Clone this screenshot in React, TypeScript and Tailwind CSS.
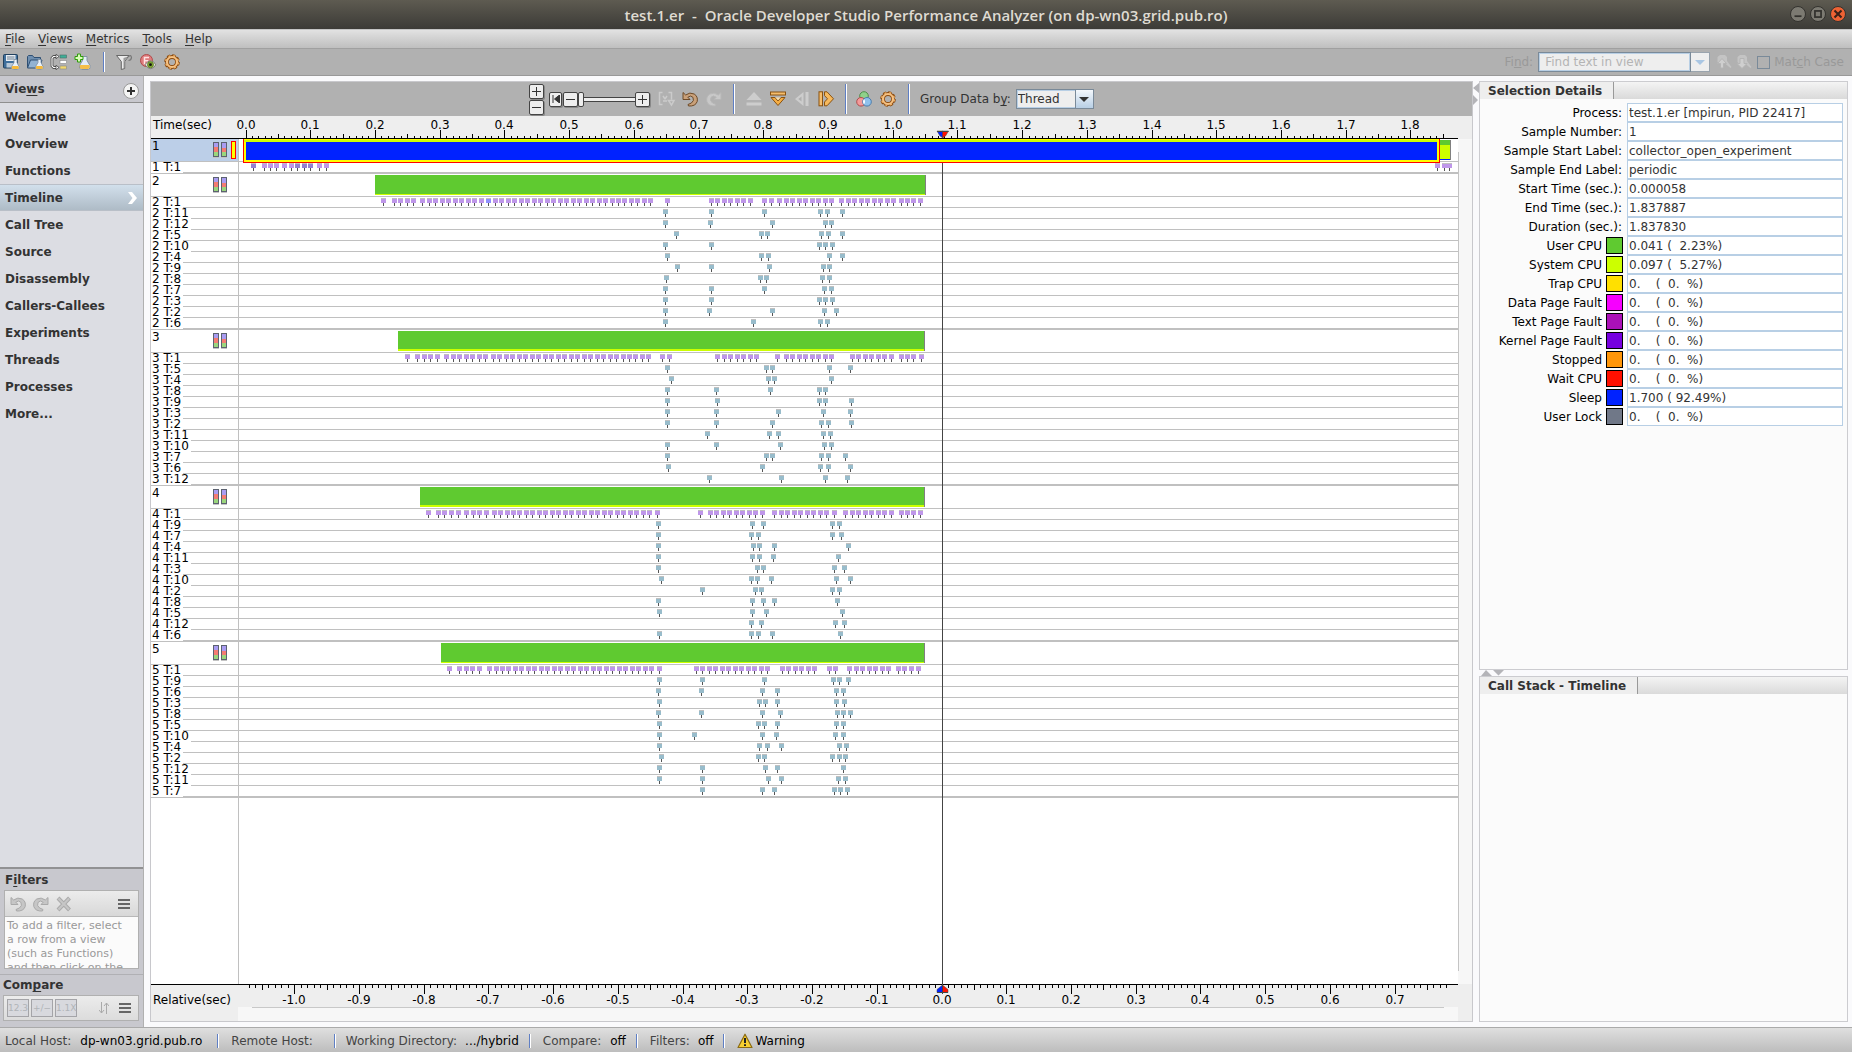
import React from "react";

/* ---------- timeline data ---------- */

// Horizontal positions are measured on the sheet that holds the row headers and the lanes.
const LANE_START = 239;
const ORIGIN = 246;
const STEP = 64.72;
const CURSOR = 942;

type Thread = { name: string; flags: number[]; call?: boolean };
type Group = {
  id: string;
  start: number;
  end: number;
  system: number;
  selected?: boolean;
  threads: Thread[];
};

const G1_MAIN = [253, 264, 270, 276, 284, 291, 297, 304, 310, 319, 326, 1437, 1444, 1449];
const G2_MAIN = [
  383, 394, 400, 407, 413, 422, 429, 435, 442, 448, 455, 461, 468, 474, 481, 488, 495, 501, 508, 514, 521, 527, 534,
  540, 547, 553, 560, 566, 573, 579, 586, 592, 599, 605, 612, 618, 624, 631, 637, 644, 650, 667, 711, 717, 724, 730,
  737, 743, 750, 764, 771, 779, 786, 792, 799, 805, 812, 818, 825, 831, 841, 848, 854, 861, 867, 874, 880, 887, 893,
  901, 907, 913, 920,
];
const G3_MAIN = [
  407, 417, 424, 430, 437, 446, 453, 459, 466, 472, 479, 485, 493, 499, 506, 512, 519, 525, 532, 538, 545, 551, 558,
  564, 571, 577, 584, 590, 597, 603, 610, 616, 623, 629, 635, 642, 648, 662, 669, 717, 724, 730, 737, 743, 750, 756,
  777, 786, 792, 799, 805, 812, 818, 825, 831, 852, 858, 865, 871, 878, 884, 891, 901, 907, 913, 921,
];
const G4_MAIN = [
  428, 438, 444, 451, 458, 466, 473, 479, 486, 494, 500, 507, 513, 519, 526, 532, 539, 545, 552, 558, 565, 571, 578,
  584, 591, 597, 604, 610, 617, 623, 630, 636, 643, 649, 657, 700, 710, 716, 723, 729, 736, 742, 749, 755, 762, 774,
  781, 787, 794, 800, 807, 813, 820, 826, 834, 845, 852, 858, 865, 871, 878, 884, 891, 901, 907, 913, 920,
];
const G5_MAIN = [
  449, 459, 466, 472, 479, 489, 496, 502, 508, 515, 521, 528, 534, 541, 547, 554, 560, 567, 573, 580, 586, 593, 599,
  606, 612, 619, 625, 632, 638, 645, 651, 659, 696, 702, 709, 715, 722, 728, 735, 741, 748, 754, 761, 767, 782, 788,
  795, 801, 808, 814, 829, 835, 849, 856, 862, 869, 875, 882, 888, 898, 904, 911, 918,
];

const GROUPS: Group[] = [
  {
    id: "1",
    start: 246,
    end: 1451,
    system: 0,
    selected: true,
    threads: [{ name: "1 T:1", call: true, flags: G1_MAIN }],
  },
  {
    id: "2",
    start: 375,
    end: 926,
    system: 1,
    threads: [
      { name: "2 T:1", call: true, flags: G2_MAIN },
      { name: "2 T:11", flags: [665, 711, 764, 820, 827, 842] },
      { name: "2 T:12", flags: [665, 710, 772, 825, 831] },
      { name: "2 T:5", flags: [676, 761, 767, 821, 828, 842] },
      { name: "2 T:10", flags: [665, 711, 819, 825, 832] },
      { name: "2 T:4", flags: [667, 761, 768, 829, 842] },
      { name: "2 T:9", flags: [677, 711, 769, 823, 829] },
      { name: "2 T:8", flags: [666, 760, 766, 822, 829] },
      { name: "2 T:7", flags: [665, 711, 764, 824, 831] },
      { name: "2 T:3", flags: [665, 711, 819, 825, 832] },
      { name: "2 T:2", flags: [665, 709, 772, 824, 836] },
      { name: "2 T:6", flags: [665, 753, 820, 827] },
    ],
  },
  {
    id: "3",
    start: 398,
    end: 925,
    system: 2,
    threads: [
      { name: "3 T:1", call: true, flags: G3_MAIN },
      { name: "3 T:5", flags: [667, 766, 772, 829, 850] },
      { name: "3 T:4", flags: [671, 768, 774, 831] },
      { name: "3 T:8", flags: [667, 716, 770, 819, 825] },
      { name: "3 T:9", flags: [667, 717, 819, 825, 851] },
      { name: "3 T:3", flags: [667, 716, 778, 823, 850] },
      { name: "3 T:2", flags: [667, 716, 772, 821, 828, 851] },
      { name: "3 T:11", flags: [707, 769, 778, 823, 830] },
      { name: "3 T:10", flags: [667, 716, 780, 824, 831] },
      { name: "3 T:7", flags: [667, 766, 772, 821, 828, 845] },
      { name: "3 T:6", flags: [668, 762, 820, 828, 850] },
      { name: "3 T:12", flags: [709, 781, 825, 847] },
    ],
  },
  {
    id: "4",
    start: 420,
    end: 925,
    system: 2,
    threads: [
      { name: "4 T:1", call: true, flags: G4_MAIN },
      { name: "4 T:9", flags: [658, 752, 763, 832, 839] },
      { name: "4 T:7", flags: [658, 751, 758, 832, 841] },
      { name: "4 T:4", flags: [658, 753, 759, 774, 848] },
      { name: "4 T:11", flags: [658, 752, 759, 773, 838] },
      { name: "4 T:3", flags: [658, 757, 763, 834, 844] },
      { name: "4 T:10", flags: [661, 751, 757, 771, 836, 850] },
      { name: "4 T:2", flags: [702, 755, 761, 832, 839] },
      { name: "4 T:8", flags: [658, 752, 763, 774, 837] },
      { name: "4 T:5", flags: [659, 752, 766, 842] },
      { name: "4 T:12", flags: [751, 761, 835, 844] },
      { name: "4 T:6", flags: [659, 751, 758, 772, 840] },
    ],
  },
  {
    id: "5",
    start: 441,
    end: 925,
    system: 1,
    threads: [
      { name: "5 T:1", call: true, flags: G5_MAIN },
      { name: "5 T:9", flags: [659, 702, 764, 833, 839, 848] },
      { name: "5 T:6", flags: [658, 701, 762, 777, 836, 843] },
      { name: "5 T:3", flags: [659, 759, 765, 777, 836, 844] },
      { name: "5 T:8", flags: [658, 701, 762, 780, 837, 843, 850] },
      { name: "5 T:5", flags: [659, 758, 764, 777, 836, 843] },
      { name: "5 T:10", flags: [659, 694, 762, 776, 835, 843] },
      { name: "5 T:4", flags: [659, 759, 767, 781, 839, 846] },
      { name: "5 T:2", flags: [661, 758, 764, 832, 839, 845] },
      { name: "5 T:12", flags: [659, 702, 765, 777, 843] },
      { name: "5 T:11", flags: [659, 702, 768, 781, 838, 845] },
      { name: "5 T:7", flags: [702, 762, 774, 834, 840, 847] },
    ],
  },
];

const DARK_FLAGS = [253, 297, 304, 310];

function flagColor(group: string, thread: Thread, x: number) {
  if (!thread.call) return "#98bccb";
  if (group === "1" && DARK_FLAGS.includes(x)) return "#9480d0";
  if (group === "2" && x === 488) return "#9090ff";
  return "#bf97ea";
}

/* ---------- icons ---------- */

type IconProps = { children: React.ReactNode; className?: string };
const Icon = ({ children, className = "size-4" }: IconProps) => (
  <svg viewBox="0 0 16 16" className={className + " shrink-0 overflow-visible"} aria-hidden="true">
    {children}
  </svg>
);

const Flask = () => (
  <g>
    <path d="M11 5.5h3v3l2 4q.6 2.8-1.6 3h-4.2q-2.2-.3-1.6-3l2.4-4z" fill="#e8f1fa" stroke="#7c8ea0" strokeWidth=".8" />
    <path d="M9.300 12h6l.6 1.800q0 1.200-1.400 1.300h-4.400q-1.500-.1-1.400-1.300z" fill="#f6b93b" />
  </g>
);
const SaveIcon = () => (
  <Icon>
    <rect x=".5" y=".5" width="14" height="13.500" rx="1" fill="#3f6f9c" stroke="#23425f" />
    <rect x="3" y="1" width="9.500" height="6" fill="#e9eef3" />
    <path d="M4 3h7.500M4 5h7.500" stroke="#6d8092" />
    <rect x="3.500" y="9" width="7" height="4.500" fill="#b9c9d8" />
    <Flask />
  </Icon>
);
const OpenIcon = () => (
  <Icon>
    <path d="M.5 13.500v-11l1-1h4l1.500 2h6.500v2.500" fill="#6f8fb0" stroke="#2e4f73" />
    <path d="M.5 14l3-8h11.500l-2.500 8z" fill="#93b3d2" stroke="#2e4f73" />
    <Flask />
  </Icon>
);
const TreeIcon = () => (
  <Icon>
    <path d="M5.500 2.500H2.500l-1.500 1.500v8l1.500 1.500h3" fill="none" stroke="#333" strokeWidth="2.600" />
    <path d="M5.500 2.500H2.500l-1.500 1.500v8l1.500 1.500h3" fill="none" stroke="#fff" strokeWidth="1.200" />
    <path d="M5 .3l3 2.200-3 2.200zM5 11.300l3 2.200-3 2.200z" fill="#fff" stroke="#333" strokeWidth=".7" />
    <rect x="9" y="1" width="6.500" height="3" fill="#3fae97" stroke="#4a6b66" strokeWidth=".6" />
    <rect x="9" y="6.500" width="6.500" height="3" fill="#fff" stroke="#888" strokeWidth=".6" />
    <rect x="9" y="12" width="6.500" height="3" fill="#f3d86b" stroke="#888" strokeWidth=".6" />
  </Icon>
);
const AddFlaskIcon = () => (
  <Icon>
    <path d="M7 2.500h5v4l3 5q1 3.500-2 4H6.500q-3-.5-2-4l3-5z" fill="#e3edf8" stroke="#8493a5" />
    <path d="M5 11h9.500q1 3.600-1.600 4H6.600q-2.800-.4-1.600-4z" fill="#f5be4a" />
    <path d="M2.500 0h3v2.500H8v3H5.500V8h-3V5.500H0v-3h2.500z" fill="#d9ffb8" stroke="#2e9b0b" />
  </Icon>
);
const FunnelIcon = () => (
  <Icon>
    <path d="M.5 1.500h12.500l-4.300 6v7l-3.400 1v-8z" fill="#ececec" stroke="#666" />
    <path d="M7.500 4v10l1-.4V7l3.500-4.500" fill="#9a9a9a" />
    <path d="M12 3q3-3 3.500.5-.3 3-3 3" fill="none" stroke="#777" strokeWidth="1.200" />
  </Icon>
);
const EyeIcon = () => (
  <Icon>
    <circle cx="6.500" cy="6.500" r="6" fill="#df7c7e" stroke="#b04a4a" />
    <path d="M4.500 10.500V3.500h4.500M4.500 6.800h3.800" stroke="#ffe3e3" strokeWidth="1.500" fill="none" />
    <path d="M5 10.800q2.500-4 5.700-4t5 4q-2 3.900-5 3.900t-5.700-3.900z" fill="#ecece4" stroke="#666" strokeWidth=".8" />
    <circle cx="10.500" cy="10.700" r="3.100" fill="#7fa836" stroke="#4f6b1d" strokeWidth=".6" />
    <circle cx="10.500" cy="10.700" r="1.400" fill="#111" />
  </Icon>
);
const GearIcon = () => (
  <Icon>
    <circle cx="8" cy="8" r="6.600" fill="none" stroke="#8a4b12" strokeWidth="2.400" strokeDasharray="3.200 1.984" />
    <circle cx="8" cy="8" r="5" fill="none" stroke="#8a4b12" strokeWidth="3.800" />
    <circle
      cx="8"
      cy="8"
      r="6.400"
      fill="none"
      stroke="#f3b568"
      strokeWidth="1.400"
      strokeDasharray="1.900 3.127"
      strokeDashoffset="-.6"
    />
    <circle cx="8" cy="8" r="5" fill="none" stroke="#f6c182" strokeWidth="2.200" />
  </Icon>
);
const SwirlIcon = ({ flip, tone }: { flip?: boolean; tone: "brown" | "pale" | "gray" }) => {
  const outer = tone === "brown" ? "#6d4a28" : tone === "gray" ? "#a9a9a9" : "#b7b7b7";
  const inner = tone === "brown" ? "#c9a079" : tone === "gray" ? "#c6c6c6" : "#c8c8c8";
  return (
    <Icon>
      <g transform={flip ? "matrix(-1 0 0 1 16 0)" : undefined}>
        <path
          d="M1 1.500v7h7L5.800 6.200q3-2.400 5.200.2 1.600 3.400-1.600 5.600l-3.400 1.500.5 1.500q7 .5 8.700-4.500 1-5-3-7.500-4.400-2.300-8.500 1z"
          fill={inner}
          stroke={outer}
        />
      </g>
    </Icon>
  );
};
const BracketIcon = () => (
  <Icon>
    <path
      d="M4.500 1.500h-3v12h3M10.500 1.500h3v7M13.500 14l-3-4.500h5.500zM5 5l2 3M9 5l-2 3M5 10h4"
      fill="none"
      stroke="#cbcbcb"
      strokeWidth="1.500"
    />
  </Icon>
);
const EjectIcon = () => (
  <Icon>
    <path d="M8 1l7.500 8H.5zM.5 11.500h15v3H.5z" fill="#cdcdcd" />
  </Icon>
);
const DownIcon = () => (
  <Icon>
    <rect x=".5" y="1" width="15" height="3" fill="#f5bd6c" stroke="#8a5210" />
    <path d="M1 6.500h4l3 3.500 3-3.500h4L8 14.500z" fill="#f5ae45" stroke="#8a5210" />
    <path d="M5.500 6.500h5L8 9.300z" fill="#ffe0a8" />
  </Icon>
);
const BackIcon = () => (
  <Icon>
    <path d="M9.500 1v14L1 8zM11.500 1h3v14h-3z" fill="#cdcdcd" />
    <path d="M7.500 5.500v5L4.300 8z" fill="#b0b0b0" />
  </Icon>
);
const ForwardIcon = () => (
  <Icon>
    <rect x="1" y=".8" width="3.500" height="14" fill="#f5bd6c" stroke="#8a5210" />
    <path d="M6.500.8h2.500l6.500 7-6.500 7H6.500v-3.800l3-3.200-3-3.200z" fill="#f7b95c" stroke="#8a5210" />
  </Icon>
);
const ColorsIcon = () => (
  <Icon>
    <circle cx="8" cy="5" r="4.300" fill="#8fd18a" stroke="#4f8f4b" />
    <circle cx="5" cy="10.800" r="4.300" fill="#f49a9a" stroke="#b04b4b" />
    <circle cx="11" cy="10.800" r="4.300" fill="#8fc1ec" stroke="#4b7cab" />
    <path d="M8 8q2 2.600 0 5.600-2-3 0-5.600" fill="#fff" />
  </Icon>
);
const FindArrow = ({ down }: { down?: boolean }) => (
  <Icon>
    <path d="M4 1h5l2 2v4l4.500 6-1 1L9 9.500H3L1.500 8V3z" fill="#c4c4c4" />
    <path d={down ? "M4 4.500v5H1l5 5 5-5H8v-5z" : "M4.500 14V9.500h-3l4.500-5 4.500 5h-3V14z"} fill="#cfcfcf" stroke="#b5b5b5" />
  </Icon>
);

const PlusBox = ({ label, minus }: { label: string; minus?: boolean }) => (
  <button
    aria-label={label}
    className="flex size-[15px] items-center justify-center rounded-[2px] border border-[#444] bg-[#eee] shadow-[1px_1px_0_#888]"
  >
    <svg className="size-[9px]" viewBox="0 0 9 9" aria-hidden="true">
      <path d={minus ? "M0 4.500h9" : "M0 4.500h9M4.500 0v9"} stroke="#333" strokeWidth="1" />
    </svg>
  </button>
);

const Sep = ({ className }: { className: string }) => (
  <span className={"w-[2px] shrink-0 border-l border-[#5f7fc4] bg-white " + className} />
);

const Lines = () => (
  <svg viewBox="0 0 12 10" className="h-[10px] w-3" aria-hidden="true">
    <path d="M0 1h12M0 5h12M0 9h12" stroke="#666" strokeWidth="2" />
  </svg>
);

/* ---------- window chrome ---------- */

function TitleBar() {
  return (
    <header className="relative flex h-[29px] shrink-0 items-center justify-center bg-linear-to-b from-[#5e5b51] to-[#3c3b37]">
      <h1 className="whitespace-pre font-['Open_Sans',sans-serif] text-[15px] font-semibold leading-5 text-[#dfdbd2]">
        test.1.er  -  Oracle Developer Studio Performance Analyzer (on dp-wn03.grid.pub.ro)
      </h1>
      <div className="absolute top-1.5 right-1.5 flex gap-1">
        <button aria-label="Minimize" className="size-4 rounded-full border border-[#33322e] bg-[#7c7a72]">
          <Icon className="size-[14px]">
            <path d="M4 10.500h8" stroke="#33322e" strokeWidth="2" />
          </Icon>
        </button>
        <button aria-label="Maximize" className="size-4 rounded-full border border-[#33322e] bg-[#7c7a72]">
          <Icon className="size-[14px]">
            <rect x="4.500" y="4.500" width="7" height="7" fill="none" stroke="#33322e" strokeWidth="2" />
          </Icon>
        </button>
        <button aria-label="Close" className="size-4 rounded-full border border-[#33322e] bg-[#ee6234]">
          <Icon className="size-[14px]">
            <path d="M4 4l8 8M12 4l-8 8" stroke="#3a2018" strokeWidth="2.400" />
          </Icon>
        </button>
      </div>
    </header>
  );
}

const MENUS = [
  ["F", "ile"],
  ["V", "iews"],
  ["M", "etrics"],
  ["T", "ools"],
  ["H", "elp"],
];

function MenuBar() {
  return (
    <nav className="flex h-5 shrink-0 items-center gap-[13px] border-t border-b border-t-[#c4c4c4] border-b-[#a0a0a0] bg-linear-to-b from-[#e2e2e2] to-[#bfbfbf] pl-[5px] text-[#333]">
      {MENUS.map(([key, rest]) => (
        <button key={rest}>
          <span className="underline underline-offset-2">{key}</span>
          {rest}
        </button>
      ))}
    </nav>
  );
}

const TOOLS: [string, React.ReactNode][] = [
  ["Save experiment", <SaveIcon />],
  ["Open experiment", <OpenIcon />],
  ["Compare experiments", <TreeIcon />],
  ["Add experiment", <AddFlaskIcon />],
];
const TOOLS2: [string, React.ReactNode][] = [
  ["Filter", <FunnelIcon />],
  ["Show functions", <EyeIcon />],
  ["Settings", <GearIcon />],
];

function MainToolbar() {
  return (
    <div className="flex h-[27px] shrink-0 items-center border-b border-[#999] bg-[#b1b1b1] pl-[3px]">
      <div className="flex gap-2">
        {TOOLS.map(([name, icon]) => (
          <button key={name} aria-label={name}>
            {icon}
          </button>
        ))}
      </div>
      <Sep className="ml-3 mr-[11px] h-5" />
      <div className="flex gap-2">
        {TOOLS2.map(([name, icon]) => (
          <button key={name} aria-label={name}>
            {icon}
          </button>
        ))}
      </div>
      <div className="ml-auto flex items-center pr-2 text-[#999]">
        <label htmlFor="find" className="mr-[5px]">
          Fi<span className="underline">n</span>d:
        </label>
        <input
          id="find"
          placeholder="Find text in view"
          className="h-5 w-[153px] border border-[#7a8a99] bg-[#eee] px-1.5 shadow-[inset_0_0_0_1px_#b8cfe5] outline-none placeholder:text-[#b4b4b4]"
        />
        <button
          aria-label="Find history"
          className="flex h-5 w-[19px] items-center justify-center border border-l-0 border-[#9aa4ae] bg-[#eee]"
        >
          <svg viewBox="0 0 10 5" className="h-[5px] w-[10px]" aria-hidden="true">
            <path d="M0 0h10L5 5z" fill="#a9c6e3" />
          </svg>
        </button>
        <button aria-label="Find previous" className="ml-1.5">
          <FindArrow />
        </button>
        <button aria-label="Find next" className="ml-1">
          <FindArrow down />
        </button>
        <label className="ml-[5px] flex items-center gap-1">
          <input type="checkbox" className="size-[13px] appearance-none border border-[#7a8a99]" />
          <span>
            Mat<span className="underline">c</span>h Case
          </span>
        </label>
      </div>
    </div>
  );
}

/* ---------- sidebar ---------- */

const VIEWS = [
  "Welcome",
  "Overview",
  "Functions",
  "Timeline",
  "Call Tree",
  "Source",
  "Disassembly",
  "Callers-Callees",
  "Experiments",
  "Threads",
  "Processes",
  "More...",
];

function Sidebar() {
  return (
    <aside className="flex w-36 shrink-0 flex-col border-r border-[#b0b0b0] bg-[#dcdde3] font-bold text-[#333]">
      <div className="flex h-[27px] shrink-0 items-center justify-between border-b border-[#8f8f8f] bg-[#c8c8ce] pr-1 pl-[5px]">
        <span>
          Vie<span className="underline underline-offset-2">w</span>s
        </span>
        <button
          aria-label="Add view"
          className="mt-1 flex size-4 items-center justify-center rounded-full border border-[#999] bg-[#f4f4f4]"
        >
          <svg viewBox="0 0 8 8" className="size-2" aria-hidden="true">
            <path d="M0 4h8M4 0v8" stroke="#333" strokeWidth="2" />
          </svg>
        </button>
      </div>
      <ul className="min-h-0 flex-1">
        {VIEWS.map((view) =>
          view === "Timeline" ? (
            <li key={view}>
              <button className="flex h-[27px] w-full items-center justify-between border-t border-b border-[#b9bfc8] bg-linear-to-b from-[#d2e0ec] to-[#aebbc6] pr-[5px] pl-[5px] text-left">
                {view}
                <svg viewBox="0 0 10 14" className="h-[14px] w-[10px]" aria-hidden="true">
                  <path d="M0 1h4l5 6-5 6H0l4.500-6z" fill="#fff" />
                </svg>
              </button>
            </li>
          ) : (
            <li key={view}>
              <button className="flex h-[27px] w-full items-center pl-[5px] text-left">{view}</button>
            </li>
          ),
        )}
      </ul>
      <section className="border-t-2 border-[#919193] bg-[#c8c8ce] pt-px pb-[5px]">
        <h2 className="pl-[5px] leading-5">
          F<span className="underline underline-offset-2">i</span>lters
        </h2>
        <div className="mr-1 ml-1 h-[79px] border border-[#b0b0b0] bg-[#fbfbfb]">
          <div className="flex h-[26px] items-center gap-[7px] border-b border-[#b8b8b8] bg-linear-to-b from-[#ececec] to-[#d8d8d8] px-[5px]">
            <button aria-label="Undo filter">
              <SwirlIcon tone="gray" />
            </button>
            <button aria-label="Redo filter">
              <SwirlIcon tone="gray" flip />
            </button>
            <button aria-label="Remove filter">
              <Icon>
                <path d="M2 2l11.500 12M13.500 2L2 14" stroke="#ababab" strokeWidth="4" />
                <path d="M2.500 2.500l10.500 11M13 2.500L2.500 13.500" stroke="#c6c6c6" strokeWidth="2" />
              </Icon>
            </button>
            <button aria-label="Filter menu" className="mr-[3px] ml-auto">
              <Lines />
            </button>
          </div>
          <p className="h-[51px] overflow-hidden pt-[2px] pl-[2px] text-[11px] font-normal leading-[14px] whitespace-pre text-[#999]">
            {"To add a filter, select\na row from a view\n(such as Functions)\nand then click on the"}
          </p>
        </div>
      </section>
      <section className="border-t border-[#b0b0b4] bg-[#c8c8ce] pb-1.5">
        <h2 className="pl-[3px] leading-5">
          Com<span className="underline underline-offset-2">p</span>are
        </h2>
        <div className="mr-1 ml-[3px] flex h-[26px] items-center gap-[2px] border border-[#b0b0b0] bg-linear-to-b from-[#ececec] to-[#dcdcdc] pr-[7px] pl-[3px] text-[9px] font-normal text-[#b0b4b8]">
          <button className="h-[18px] w-[22px] border border-[#a4a4a8] bg-[#d8d9de]">12.3</button>
          <button className="h-[18px] w-[22px] border border-[#a4a4a8] bg-[#d8d9de]">+/−</button>
          <button className="h-[18px] w-[22px] border border-[#a4a4a8] bg-[#d8d9de]">1.1X</button>
          <button aria-label="Sort order" className="ml-auto">
            <svg viewBox="0 0 10 12" className="mr-2 h-3 w-[10px]" aria-hidden="true">
              <path d="M2.500 0v11M0 8l2.500 3L5 8M7.500 12V1M5 4l2.500-3L10 4" fill="none" stroke="#aaa" />
            </svg>
          </button>
          <button aria-label="Compare menu">
            <Lines />
          </button>
        </div>
      </section>
    </aside>
  );
}

/* ---------- timeline ---------- */

function TimelineToolbar() {
  return (
    <div className="flex h-[34px] shrink-0 items-center bg-[#b1b1b1] pl-[378px] text-[#333]">
      <div className="mr-[5px] flex flex-col gap-px">
        <PlusBox label="Taller rows" />
        <PlusBox label="Shorter rows" minus />
      </div>
      <button
        aria-label="Reset zoom"
        className="mr-px flex h-[15px] w-[13px] items-center justify-center rounded-[2px] border border-[#444] bg-[#eee] shadow-[1px_1px_0_#888]"
      >
        <svg viewBox="0 0 8 8" className="size-2" aria-hidden="true">
          <path d="M1 0v8M7.500 0v8L2.500 4z" stroke="#333" fill="#333" />
        </svg>
      </button>
      <PlusBox label="Zoom out" minus />
      <input
        type="range"
        aria-label="Zoom level"
        defaultValue="0"
        className="h-[15px] w-[57px] appearance-none bg-[linear-gradient(#444,#444),linear-gradient(#eee,#eee),linear-gradient(#444,#444)] bg-[length:100%_1px,100%_3px,100%_1px] bg-[position:0_5px,0_6px,0_9px] bg-no-repeat [&::-webkit-slider-thumb]:h-[15px] [&::-webkit-slider-thumb]:w-[6px] [&::-webkit-slider-thumb]:appearance-none [&::-webkit-slider-thumb]:rounded-[2px] [&::-webkit-slider-thumb]:border [&::-webkit-slider-thumb]:border-[#444] [&::-webkit-slider-thumb]:bg-[#eee]"
      />
      <PlusBox label="Zoom in" />
      <div className="ml-2 flex gap-2">
        <button aria-label="Zoom to selection">
          <BracketIcon />
        </button>
        <button aria-label="Undo zoom">
          <SwirlIcon tone="brown" />
        </button>
        <button aria-label="Redo zoom">
          <SwirlIcon tone="pale" flip />
        </button>
      </div>
      <Sep className="mr-[11px] ml-[11px] h-[30px]" />
      <div className="flex gap-2">
        <button aria-label="Previous row">
          <EjectIcon />
        </button>
        <button aria-label="Next row">
          <DownIcon />
        </button>
        <button aria-label="Previous event">
          <BackIcon />
        </button>
        <button aria-label="Next event">
          <ForwardIcon />
        </button>
      </div>
      <Sep className="mr-[9px] ml-[11px] h-[30px]" />
      <div className="flex gap-2">
        <button aria-label="Call stack colors">
          <ColorsIcon />
        </button>
        <button aria-label="Timeline settings">
          <GearIcon />
        </button>
      </div>
      <Sep className="mr-[10px] ml-3 h-[30px]" />
      <label htmlFor="group" className="mr-[5px]">
        Group Data b<span className="underline underline-offset-2">y</span>:
      </label>
      <div className="relative">
        <select
          id="group"
          className="h-5 w-[78px] appearance-none border border-[#7a8a99] bg-[#eee] pl-[1px] shadow-[inset_0_0_0_1px_#b8cfe5]"
        >
          <option>Thread</option>
        </select>
        <span className="pointer-events-none absolute top-px right-px flex h-[18px] w-[18px] items-center justify-center border-l border-[#7a8a99] bg-linear-to-b from-[#f4f8fc] to-[#b8cfe5]">
          <svg viewBox="0 0 10 5" className="h-[5px] w-[10px]" aria-hidden="true">
            <path d="M0 0h10L5 5z" fill="#333" />
          </svg>
        </span>
      </div>
    </div>
  );
}

const range = (from: number, to: number) => Array.from({ length: to - from + 1 }, (_, i) => from + i);
const SHEET_LEFT = 151;

function TopAxis() {
  return (
    <svg className="h-[23px] w-full shrink-0 bg-[#eee] text-[12px]" role="img" aria-label="Time in seconds">
      <text x="2" y="13">
        Time(sec)
      </text>
      {range(0, 185).map((i) => {
        const h = i % 10 === 0 ? 8 : i % 5 === 0 ? 4 : 2;
        return (
          <rect key={i} x={Math.floor(ORIGIN - SHEET_LEFT + (i * STEP) / 10)} y={22 - h} width="1" height={h} />
        );
      })}
      {range(0, 18).map((i) => (
        <text key={i} x={Math.floor(ORIGIN - SHEET_LEFT + i * STEP)} y="13" textAnchor="middle">
          {(i / 10).toFixed(1)}
        </text>
      ))}
      <rect x="0" y="22" width="1307" height="1" />
      <path d="M786 15h6v7l-3-2z" fill="#02f" stroke="#444" strokeWidth=".5" />
      <path d="M791.500 15h6l-3 5-3 2z" fill="#f10" stroke="#444" strokeWidth=".5" />
      <path d="M786 15.500h11.500" stroke="#444" />
    </svg>
  );
}

function BottomAxis() {
  return (
    <div className="flex h-[37px] shrink-0 flex-col bg-[#eee]">
      <svg className="h-[23px] w-full text-[12px]" role="img" aria-label="Relative time in seconds">
        <rect x="0" y="0" width="1307" height="1" />
        <text x="2" y="20">
          Relative(sec)
        </text>
        {range(-107, 78).map((i) => {
          const h = i % 10 === 0 ? 9 : i % 5 === 0 ? 5 : 3;
          return <rect key={i} x={Math.floor(CURSOR - SHEET_LEFT + (i * STEP) / 10)} y="1" width="1" height={h} />;
        })}
        {range(-10, 7).map((i) => (
          <text key={i} x={Math.floor(CURSOR - SHEET_LEFT + i * STEP)} y="20" textAnchor="middle">
            {(i / 10).toFixed(1)}
          </text>
        ))}
        <path d="M791.500 1v7.500h-5.500v-3z" fill="#02f" stroke="#444" strokeWidth=".5" />
        <path d="M791.500 1v7.500h5.500v-3z" fill="#f10" stroke="#444" strokeWidth=".5" />
        <path d="M786 8.500h11M791.500 0v10" stroke="#444" />
      </svg>
      <div className="mr-[14px] ml-[87px] flex-1 bg-[#f7f7f7] px-[14px]">
        <div className="h-px bg-[#c8c8c8]" />
      </div>
    </div>
  );
}

const ProfileBars = () => (
  <svg viewBox="0 0 14 16" className="h-4 w-[14px]" aria-hidden="true">
    <rect width="6" height="15" fill="#5c6270" />
    <rect x="1" y="1" width="4" height="4" fill="#a99cf2" />
    <rect x="1" y="5" width="4" height="5" fill="#f47c72" />
    <rect x="1" y="10" width="4" height="4" fill="#9ad67c" />
    <rect x="8" width="6" height="15" fill="#5c6270" />
    <rect x="9" y="1" width="4" height="5" fill="#a99cf2" />
    <rect x="9" y="6" width="4" height="4" fill="#f47c72" />
    <rect x="9" y="10" width="4" height="4" fill="#9ad67c" />
    <path d="M0 15.500h6M8 15.500h6" stroke="#c4c4c4" />
  </svg>
);

function GroupRows({ group }: { group: Group }) {
  const x = group.start - LANE_START;
  const width = group.end - group.start;
  return (
    <section className="border-b-2 border-[#c0c0c0]">
      <div className="flex h-[23px] border-b border-[#c0c0c0]">
        {group.selected ? (
          <div className="flex w-[87px] shrink-0 items-start bg-[#bccfe8] pl-px">
            <span className="flex-1 leading-3 pt-px">{group.id}</span>
            <span className="pt-[3px]">
              <ProfileBars />
            </span>
            <span className="mt-[2px] mr-[2px] ml-1 h-[18px] w-[5px] border border-[#f00] bg-[#ff0]" />
          </div>
        ) : (
          <div className="flex w-[87px] shrink-0 items-start pl-px">
            <span className="flex-1 leading-3 pt-px">{group.id}</span>
            <span className="mr-[11px] pt-[3px]">
              <ProfileBars />
            </span>
          </div>
        )}
        <svg
          className="relative z-10 h-[22px] min-w-0 flex-1 overflow-visible border-l border-[#c0c0c0]"
          role="img"
          aria-label={"Process " + group.id + " samples"}
        >
          {group.selected ? (
            <g>
              <rect x="4" y="0" width="1197" height="24" fill="#f00" />
              <rect x="5" y="0" width="1195" height="23" fill="#ff0" />
              <rect x="5" y="1" width="1193" height="2" fill="#cf0" />
              <rect x="7" y="3" width="1191" height="18" fill="#02f" />
              <rect x="1201" y="1" width="10" height="5" fill="#5fca30" />
              <rect x="1201" y="6" width="10" height="14" fill="#cf0" />
              <rect x="1201" y="20" width="10" height="1" fill="#02f" />
              <rect x="1211" y="1" width="1" height="20" fill="#808080" />
            </g>
          ) : (
            <g>
              <rect x={x} y="1" width={width - 1} height={20 - group.system} fill="#5fca30" />
              <rect x={x} y={21 - group.system} width={width - 1} height={group.system} fill="#cf0" />
              <rect x={x + width - 1} y="1" width="1" height="20" fill="#808080" />
            </g>
          )}
        </svg>
      </div>
      {group.threads.map((thread) => (
        <div key={thread.name} className="flex h-[11px] border-b border-[#c0c0c0] last:h-[10px] last:border-b-0">
          <div className="w-[87px] shrink-0">
            <span className="relative block h-[11px] w-fit bg-white pr-[2px] pl-px leading-[11px]">{thread.name}</span>
          </div>
          <svg
            className="h-[10px] min-w-0 flex-1 border-l border-[#c0c0c0]"
            role="img"
            aria-label={"Thread " + thread.name + " events"}
          >
            {thread.flags.map((f) => {
              const fx = f - LANE_START;
              return (
                <g key={f}>
                  <rect x={fx - 2} y="1" width="5" height="1" fill="#c0c0c0" />
                  <rect x={fx - 2} y="2" width="5" height="4" fill={flagColor(group.id, thread, f)} />
                  <rect x={fx} y="6" width="1" height="3" fill="#555" />
                </g>
              );
            })}
          </svg>
        </div>
      ))}
    </section>
  );
}

function Timeline() {
  return (
    <main className="flex min-w-0 flex-1 flex-col border border-[#c8c8cc]">
      <TimelineToolbar />
      <div className="flex shrink-0 bg-[#eee] text-black">
        <TopAxis />
      </div>
      <div className="flex min-h-0 flex-1 bg-white text-black">
        <div className="relative flex min-w-0 flex-1 flex-col">
          {GROUPS.map((g) => (
            <GroupRows key={g.id} group={g} />
          ))}
          <div className="ml-[87px] flex-1 border-l border-[#c0c0c0]" />
          <span className="absolute top-6 bottom-0 left-[791px] z-20 w-px bg-[#444]" />
        </div>
        <div className="w-[14px] shrink-0 bg-[#f7f7f7] pt-[13px] pb-[13px]">
          <div className="h-full w-px bg-[#c4c4c4]" />
        </div>
      </div>
      <BottomAxis />
    </main>
  );
}

/* ---------- details ---------- */

const FIELDS = [
  ["Process:", "test.1.er [mpirun, PID 22417]"],
  ["Sample Number:", "1"],
  ["Sample Start Label:", "collector_open_experiment"],
  ["Sample End Label:", "periodic"],
  ["Start Time (sec.):", "0.000058"],
  ["End Time (sec.):", "1.837887"],
  ["Duration (sec.):", "1.837830"],
];

const EMPTY = "0.    (  0.  %)";
const STATES = [
  ["User CPU", "0.041 (  2.23%)", "#5fca30"],
  ["System CPU", "0.097 (  5.27%)", "#ccff00"],
  ["Trap CPU", EMPTY, "#ffe000"],
  ["Data Page Fault", EMPTY, "#f600ff"],
  ["Text Page Fault", EMPTY, "#ab11b8"],
  ["Kernel Page Fault", EMPTY, "#7600e0"],
  ["Stopped", EMPTY, "#ff960a"],
  ["Wait CPU", EMPTY, "#ff1000"],
  ["Sleep", "1.700 ( 92.49%)", "#0022ff"],
  ["User Lock", EMPTY, "#707888"],
];

const fieldClass = "h-[19px] w-[216px] shrink-0 border border-[#b8cfe5] bg-white pl-px text-[#333] outline-none";

function PanelHeader({ title }: { title: string }) {
  return (
    <div className="flex h-[17px] shrink-0 bg-linear-to-b from-[#f4f4f4] to-[#dadada]">
      <h2 className="border-r border-[#999] bg-[#eee] pt-px pr-[11px] pl-2 font-bold leading-[17px] text-[#333]">
        {title}
      </h2>
    </div>
  );
}

function Details() {
  return (
    <aside className="flex w-[369px] shrink-0 flex-col">
      <section className="flex min-h-0 flex-1 flex-col border border-[#ccccd0] bg-[#fbfbfb] text-black">
        <PanelHeader title="Selection Details" />
        <div className="flex flex-col pt-1 pr-1">
          {FIELDS.map(([label, value]) => (
            <div key={label} className="flex items-center justify-end">
              <label htmlFor={label} className="mr-[5px]">
                {label}
              </label>
              <input id={label} readOnly value={value} className={fieldClass} />
            </div>
          ))}
          {STATES.map(([label, value, color]) => (
            <div key={label} className="flex items-center justify-end">
              <label htmlFor={label} className="mr-1">
                {label}
              </label>
              <span className="mr-1 size-[17px] border border-black" style={{ backgroundColor: color }} />
              <input id={label} readOnly value={value} className={fieldClass} />
            </div>
          ))}
        </div>
      </section>
      <div className="h-1.5 shrink-0 pl-[2px]">
        <svg className="h-1.5 w-6" viewBox="0 0 24 6" aria-hidden="true">
          <path d="M0 6l5-6 6 6zM12 0h11l-5.500 5.500z" fill="#b4b4b8" />
        </svg>
      </div>
      <section className="flex h-[346px] shrink-0 flex-col border border-[#ccccd0] bg-[#fbfbfb]">
        <PanelHeader title="Call Stack - Timeline" />
      </section>
    </aside>
  );
}

/* ---------- status bar ---------- */

function StatusBar() {
  return (
    <footer className="flex h-[25px] shrink-0 items-center whitespace-nowrap border-t border-[#aaa] bg-linear-to-b from-[#dfdfdf] to-[#bdbdbd] pt-px pl-[5px] text-[#444]">
      Local Host:
      <span className="ml-[9px] text-black">dp-wn03.grid.pub.ro</span>
      <Sep className="mr-3 ml-[15px] h-[14px]" />
      Remote Host:
      <Sep className="mr-[10px] ml-[21px] h-[14px]" />
      Working Directory:
      <span className="ml-2 text-black">.../hybrid</span>
      <Sep className="mr-3 ml-[10px] h-[14px]" />
      Compare:
      <span className="ml-[9px] text-black">off</span>
      <Sep className="mr-3 ml-[10px] h-[14px]" />
      Filters:
      <span className="ml-2 text-black">off</span>
      <Sep className="mr-3 ml-[10px] h-[14px]" />
      <button className="flex items-center gap-[2px] text-black">
        <Icon>
          <path d="M8 1.200L15 14.500H1z" fill="#f7cf2f" stroke="#8a6a14" strokeWidth="1.200" strokeLinejoin="round" />
          <path d="M8 5v5M8 11.200v1.800" stroke="#222" strokeWidth="2" />
        </Icon>
        Warning
      </button>
    </footer>
  );
}

export default function App() {
  return (
    <div className="flex h-screen flex-col overflow-hidden bg-[#fafafc] font-['DejaVu_Sans',sans-serif] text-[12px] leading-4">
      <TitleBar />
      <MenuBar />
      <MainToolbar />
      <div className="flex min-h-0 flex-1">
        <Sidebar />
        <div className="flex min-w-0 flex-1 pt-[5px] pr-1 pb-[5px] pl-1.5">
          <Timeline />
          <div className="w-1.5 shrink-0 pt-[2px]">
            <svg className="h-6 w-1.5" viewBox="0 0 6 24" aria-hidden="true">
              <path d="M6 0v10L0 5zM0 12v10l5-5z" fill="#b4b4b8" />
            </svg>
          </div>
          <Details />
        </div>
      </div>
      <StatusBar />
    </div>
  );
}
